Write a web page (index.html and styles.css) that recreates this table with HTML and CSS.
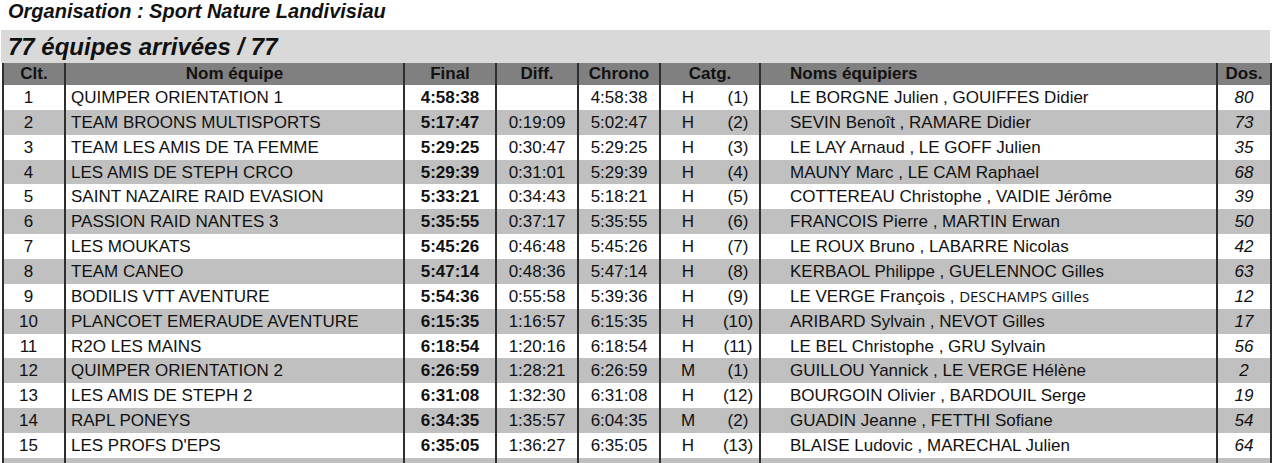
FILE: index.html
```html
<!DOCTYPE html>
<html lang="fr">
<head>
<meta charset="utf-8">
<title>Résultats - Sport Nature Landivisiau</title>
<link rel="stylesheet" href="styles.css">
</head>
<body>
<div class="page">
  <p class="org">Organisation : Sport Nature Landivisiau</p>
  <h1 class="count">77 équipes arrivées / 77</h1>
  <table class="results">
    <colgroup>
      <col class="c-clt">
      <col class="c-team">
      <col class="c-final">
      <col class="c-diff">
      <col class="c-chrono">
      <col class="c-cat">
      <col class="c-rank">
      <col class="c-names">
      <col class="c-dos">
    </colgroup>
    <thead>
      <tr>
        <th>Clt.</th>
        <th>Nom équipe</th>
        <th>Final</th>
        <th>Diff.</th>
        <th>Chrono</th>
        <th colspan="2">Catg.</th>
        <th class="names">Noms équipiers</th>
        <th>Dos.</th>
      </tr>
    </thead>
    <tbody>
      <tr><td class="clt">1</td><td class="team">QUIMPER ORIENTATION 1</td><td class="final">4:58:38</td><td class="num"></td><td class="num">4:58:38</td><td class="cat">H</td><td class="rank">(1)</td><td class="names">LE BORGNE Julien , GOUIFFES Didier</td><td class="dos">80</td></tr>
      <tr><td class="clt">2</td><td class="team">TEAM BROONS MULTISPORTS</td><td class="final">5:17:47</td><td class="num">0:19:09</td><td class="num">5:02:47</td><td class="cat">H</td><td class="rank">(2)</td><td class="names">SEVIN Benoît , RAMARE Didier</td><td class="dos">73</td></tr>
      <tr><td class="clt">3</td><td class="team">TEAM LES AMIS DE TA FEMME</td><td class="final">5:29:25</td><td class="num">0:30:47</td><td class="num">5:29:25</td><td class="cat">H</td><td class="rank">(3)</td><td class="names">LE LAY Arnaud , LE GOFF Julien</td><td class="dos">35</td></tr>
      <tr><td class="clt">4</td><td class="team">LES AMIS DE STEPH CRCO</td><td class="final">5:29:39</td><td class="num">0:31:01</td><td class="num">5:29:39</td><td class="cat">H</td><td class="rank">(4)</td><td class="names">MAUNY Marc , LE CAM Raphael</td><td class="dos">68</td></tr>
      <tr><td class="clt">5</td><td class="team">SAINT NAZAIRE RAID EVASION</td><td class="final">5:33:21</td><td class="num">0:34:43</td><td class="num">5:18:21</td><td class="cat">H</td><td class="rank">(5)</td><td class="names">COTTEREAU Christophe , VAIDIE Jérôme</td><td class="dos">39</td></tr>
      <tr><td class="clt">6</td><td class="team">PASSION RAID NANTES 3</td><td class="final">5:35:55</td><td class="num">0:37:17</td><td class="num">5:35:55</td><td class="cat">H</td><td class="rank">(6)</td><td class="names">FRANCOIS Pierre , MARTIN Erwan</td><td class="dos">50</td></tr>
      <tr><td class="clt">7</td><td class="team">LES MOUKATS</td><td class="final">5:45:26</td><td class="num">0:46:48</td><td class="num">5:45:26</td><td class="cat">H</td><td class="rank">(7)</td><td class="names">LE ROUX Bruno , LABARRE Nicolas</td><td class="dos">42</td></tr>
      <tr><td class="clt">8</td><td class="team">TEAM CANEO</td><td class="final">5:47:14</td><td class="num">0:48:36</td><td class="num">5:47:14</td><td class="cat">H</td><td class="rank">(8)</td><td class="names">KERBAOL Philippe , GUELENNOC Gilles</td><td class="dos">63</td></tr>
      <tr><td class="clt">9</td><td class="team">BODILIS VTT AVENTURE</td><td class="final">5:54:36</td><td class="num">0:55:58</td><td class="num">5:39:36</td><td class="cat">H</td><td class="rank">(9)</td><td class="names">LE VERGE François , <span class="alt">DESCHAMPS Gilles</span></td><td class="dos">12</td></tr>
      <tr><td class="clt">10</td><td class="team">PLANCOET EMERAUDE AVENTURE</td><td class="final">6:15:35</td><td class="num">1:16:57</td><td class="num">6:15:35</td><td class="cat">H</td><td class="rank">(10)</td><td class="names">ARIBARD Sylvain , NEVOT Gilles</td><td class="dos">17</td></tr>
      <tr><td class="clt">11</td><td class="team">R2O LES MAINS</td><td class="final">6:18:54</td><td class="num">1:20:16</td><td class="num">6:18:54</td><td class="cat">H</td><td class="rank">(11)</td><td class="names">LE BEL Christophe , GRU Sylvain</td><td class="dos">56</td></tr>
      <tr><td class="clt">12</td><td class="team">QUIMPER ORIENTATION 2</td><td class="final">6:26:59</td><td class="num">1:28:21</td><td class="num">6:26:59</td><td class="cat">M</td><td class="rank">(1)</td><td class="names">GUILLOU Yannick , LE VERGE Hélène</td><td class="dos">2</td></tr>
      <tr><td class="clt">13</td><td class="team">LES AMIS DE STEPH 2</td><td class="final">6:31:08</td><td class="num">1:32:30</td><td class="num">6:31:08</td><td class="cat">H</td><td class="rank">(12)</td><td class="names">BOURGOIN Olivier , BARDOUIL Serge</td><td class="dos">19</td></tr>
      <tr><td class="clt">14</td><td class="team">RAPL PONEYS</td><td class="final">6:34:35</td><td class="num">1:35:57</td><td class="num">6:04:35</td><td class="cat">M</td><td class="rank">(2)</td><td class="names">GUADIN Jeanne , FETTHI Sofiane</td><td class="dos">54</td></tr>
      <tr><td class="clt">15</td><td class="team">LES PROFS D'EPS</td><td class="final">6:35:05</td><td class="num">1:36:27</td><td class="num">6:35:05</td><td class="cat">H</td><td class="rank">(13)</td><td class="names">BLAISE Ludovic , MARECHAL Julien</td><td class="dos">64</td></tr>
      <tr class="tail"><td class="clt"></td><td class="team"></td><td class="final"></td><td class="num"></td><td class="num"></td><td class="cat"></td><td class="rank"></td><td class="names"></td><td class="dos"></td></tr>
    </tbody>
  </table>
</div>
</body>
</html>
```

FILE: styles.css
```css
html, body {
  margin: 0;
  padding: 0;
  background: #ffffff;
  overflow: hidden;
}

.page {
  width: 1274px;
  font-family: "Liberation Sans", Arial, sans-serif;
  color: #000;
}

.org {
  margin: 0;
  height: 30px;
  padding-left: 8px;
  font-size: 20px;
  line-height: 22px;
  font-weight: bold;
  font-style: italic;
  color: #111;
}

.count {
  margin: 0 0 0 1px;
  width: 1262px;
  height: 33px;
  padding-left: 7px;
  background: #d9d9d9;
  font-size: 24px;
  line-height: 34px;
  font-weight: bold;
  font-style: italic;
  color: #111;
}

.results {
  margin-left: 2px;
  width: 1268px;
  table-layout: fixed;
  border-collapse: collapse;
  font-size: 17px;
}

.c-clt { width: 62px; }
.c-team { width: 339px; }
.c-final { width: 92px; }
.c-diff { width: 82px; }
.c-chrono { width: 82px; }
.c-cat { width: 55px; }
.c-rank { width: 45px; }
.c-names { width: 457px; }
.c-dos { width: 54px; }

.results th,
.results td {
  padding: 0;
  white-space: nowrap;
  overflow: hidden;
  border-left: 2px solid #2e2e2e;
  border-right: 2px solid #2e2e2e;
}

.results th {
  height: 22px;
  background: #808080;
  font-weight: bold;
  text-align: center;
  color: #111;
  line-height: 20px;
}

.results th.names {
  text-align: left;
  padding-left: 29px;
}

.results tbody tr {
  height: 24.87px;
}

.results tbody tr:nth-child(even) {
  background: #c0c0c0;
}

.results td {
  line-height: 20px;
  padding-top: 1px;
  color: #111;
}

.results td.clt {
  text-align: center;
  padding-right: 11px;
}

.results td.team {
  padding-left: 5px;
}

.results td.final {
  text-align: center;
  font-weight: bold;
}

.results td.num {
  text-align: center;
}

.results td.cat {
  text-align: center;
  border-right: none;
}

.results td.rank {
  text-align: center;
  border-left: none;
  padding-left: 2px;
}

.results td.names {
  padding-left: 29px;
}

.results td.dos {
  text-align: center;
  font-style: italic;
}

.alt {
  font-family: "Open Sans", "Noto Sans", sans-serif;
  font-size: 15px;
}
```
